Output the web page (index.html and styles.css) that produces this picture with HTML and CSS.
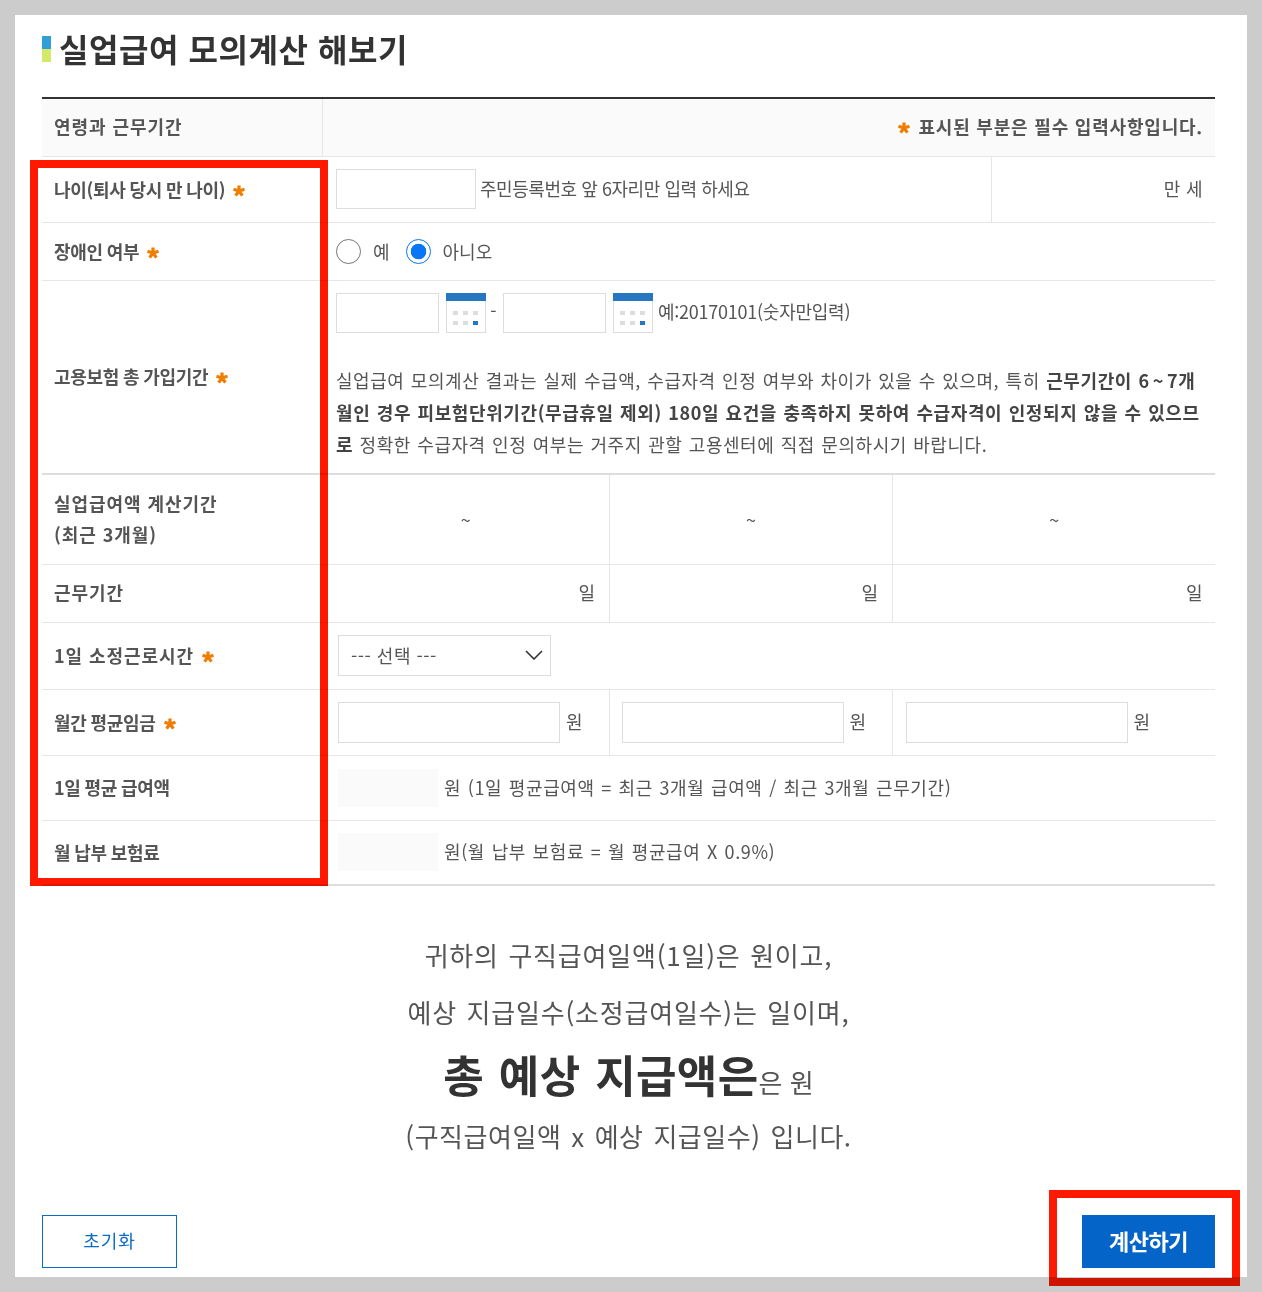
FILE: index.html
```html
<!DOCTYPE html>
<html lang="ko">
<head>
<meta charset="utf-8">
<title>실업급여 모의계산 해보기</title>
<link rel="stylesheet" href="styles.css">
</head>
<body>
<main class="panel">
  <h1 class="title"><span class="title-mark"></span>실업급여 모의계산 해보기</h1>
  <table class="calc">
    <colgroup><col class="c0"><col class="c1"><col class="c2"><col class="c3"><col class="c4"></colgroup>
    <tr class="r-head">
      <th>연령과 근무기간</th>
      <td colspan="4" class="req-note"><svg class="star star-note" width="12" height="12" viewBox="0 0 12 12"><path d="M6 6V.5M6 6l5.5-1.8M6 6l3.4 4.6M6 6l-3.4 4.6M6 6L.5 4.2" fill="none" stroke="#f07c00" stroke-width="3.2"/></svg>표시된 부분은 필수 입력사항입니다.</td>
    </tr>
    <tr class="r-age">
      <th class="tight">나이(퇴사 당시 만 나이)<svg class="star" width="12" height="12" viewBox="0 0 12 12"><path d="M6 6V.5M6 6l5.5-1.8M6 6l3.4 4.6M6 6l-3.4 4.6M6 6L.5 4.2" fill="none" stroke="#f07c00" stroke-width="3.2"/></svg></th>
      <td colspan="3"><div class="inline"><span class="field f-age"></span><span class="hint">주민등록번호 앞 6자리만 입력 하세요</span></div></td>
      <td class="unit-right sep">만 세</td>
    </tr>
    <tr class="r-dis">
      <th class="tight">장애인 여부<svg class="star" width="12" height="12" viewBox="0 0 12 12"><path d="M6 6V.5M6 6l5.5-1.8M6 6l3.4 4.6M6 6l-3.4 4.6M6 6L.5 4.2" fill="none" stroke="#f07c00" stroke-width="3.2"/></svg></th>
      <td colspan="4"><div class="inline radios"><span class="radio"></span><span class="opt">예</span><span class="radio on"></span><span class="opt">아니오</span></div></td>
    </tr>
    <tr class="r-ins">
      <th class="tight">고용보험 총 가입기간<svg class="star" width="12" height="12" viewBox="0 0 12 12"><path d="M6 6V.5M6 6l5.5-1.8M6 6l3.4 4.6M6 6l-3.4 4.6M6 6L.5 4.2" fill="none" stroke="#f07c00" stroke-width="3.2"/></svg></th>
      <td colspan="4" class="top">
        <div class="inline dates">
          <span class="field f-date"></span>
          <svg class="cal" width="40" height="40" viewBox="0 0 40 40"><rect x=".5" y=".5" width="39" height="39" fill="#fff" stroke="#ddd"/><rect width="40" height="8" fill="#2577c2"/><g fill="#ddd"><rect x="7" y="18" width="5" height="4"/><rect x="17" y="18" width="5" height="4"/><rect x="27" y="18" width="5" height="4"/><rect x="7" y="28" width="5" height="4"/><rect x="17" y="28" width="5" height="4"/></g><rect x="27" y="28" width="5" height="4" fill="#2577c2"/></svg>
          <span class="dash">-</span>
          <span class="field f-date"></span>
          <svg class="cal" width="40" height="40" viewBox="0 0 40 40"><rect x=".5" y=".5" width="39" height="39" fill="#fff" stroke="#ddd"/><rect width="40" height="8" fill="#2577c2"/><g fill="#ddd"><rect x="7" y="18" width="5" height="4"/><rect x="17" y="18" width="5" height="4"/><rect x="27" y="18" width="5" height="4"/><rect x="7" y="28" width="5" height="4"/><rect x="17" y="28" width="5" height="4"/></g><rect x="27" y="28" width="5" height="4" fill="#2577c2"/></svg>
          <span class="hint-date">예:20170101(숫자만입력)</span>
        </div>
        <p class="notice">실업급여 모의계산 결과는 실제 수급액, 수급자격 인정 여부와 차이가 있을 수 있으며, 특히 <b>근무기간이 6<span class="tilde">~</span>7개월인 경우 피보험단위기간(무급휴일 제외) 180일 요건을 충족하지 못하여 수급자격이 인정되지 않을 수 있으므로</b> 정확한 수급자격 인정 여부는 거주지 관할 고용센터에 직접 문의하시기 바랍니다.</p>
      </td>
    </tr>
    <tr class="r-period">
      <th>실업급여액 계산기간<br>(최근 3개월)</th>
      <td class="center sep-r">~</td>
      <td class="center sep-r">~</td>
      <td colspan="2" class="center">~</td>
    </tr>
    <tr class="r-days">
      <th>근무기간</th>
      <td class="unit-right sep-r">일</td>
      <td class="unit-right sep-r">일</td>
      <td colspan="2" class="unit-right">일</td>
    </tr>
    <tr class="r-hours">
      <th>1일 소정근로시간<svg class="star" width="12" height="12" viewBox="0 0 12 12"><path d="M6 6V.5M6 6l5.5-1.8M6 6l3.4 4.6M6 6l-3.4 4.6M6 6L.5 4.2" fill="none" stroke="#f07c00" stroke-width="3.2"/></svg></th>
      <td colspan="4"><div class="select">--- 선택 ---<svg width="18" height="10" viewBox="0 0 18 10"><path d="M1 1l8 8 8-8" fill="none" stroke="#333" stroke-width="1.6"/></svg></div></td>
    </tr>
    <tr class="r-wage">
      <th class="tight">월간 평균임금<svg class="star" width="12" height="12" viewBox="0 0 12 12"><path d="M6 6V.5M6 6l5.5-1.8M6 6l3.4 4.6M6 6l-3.4 4.6M6 6L.5 4.2" fill="none" stroke="#f07c00" stroke-width="3.2"/></svg></th>
      <td class="sep-r w1"><div class="inline"><span class="field f-wage"></span><span class="won">원</span></div></td>
      <td class="sep-r w2"><div class="inline"><span class="field f-wage"></span><span class="won">원</span></div></td>
      <td colspan="2" class="w3"><div class="inline"><span class="field f-wage"></span><span class="won">원</span></div></td>
    </tr>
    <tr class="r-avg">
      <th class="tight">1일 평균 급여액</th>
      <td colspan="4"><div class="inline"><span class="readout"></span><span class="wide">원 (1일 평균급여액 = 최근 3개월 급여액 / 최근 3개월 근무기간)</span></div></td>
    </tr>
    <tr class="r-fee">
      <th class="tight">월 납부 보험료</th>
      <td colspan="4"><div class="inline"><span class="readout"></span><span class="wide">원(월 납부 보험료 = 월 평균급여 X 0.9%)</span></div></td>
    </tr>
  </table>
  <section class="result">
    <p>귀하의 구직급여일액(1일)은 원이고,</p>
    <p>예상 지급일수(소정급여일수)는 일이며,</p>
    <p class="total"><strong>총 예상 지급액은</strong>은 원</p>
    <p class="closing">(구직급여일액 x 예상 지급일수) 입니다.</p>
  </section>
  <div class="actions">
    <button class="btn reset" type="button">초기화</button>
    <button class="btn run" type="button">계산하기</button>
  </div>
</main>
<div class="mark mark-form"></div>
<div class="mark mark-btn"></div>
</body>
</html>
```

FILE: styles.css
```css
* { box-sizing: border-box; }
html, body { margin: 0; padding: 0; }
body {
  position: relative;
  width: 1262px;
  height: 1292px;
  padding: 15px;
  background: #ccc;
  font-family: "Noto Sans CJK KR", "Noto Sans", sans-serif;
  color: #555;
  font-size: 18px;
  overflow: hidden;
}
.panel {
  width: 1232px;
  height: 1262px;
  background: #fff;
  padding: 0 32px 0 27px;
}
.title {
  display: flex;
  align-items: center;
  height: 82px;
  margin: 0;
  padding-bottom: 17px;
  font-size: 32px;
  font-weight: 700;
  letter-spacing: .55px;
  color: #333;
}
.title-mark {
  width: 9px;
  height: 26px;
  margin: 2px 8px 0 0;
  background: linear-gradient(#2f9fd6 0 50%, #d4e86a 50% 100%);
}
.calc {
  width: 1173px;
  table-layout: fixed;
  border-collapse: collapse;
  border-top: 2px solid #333;
  border-bottom: 2px solid #ddd;
}
.c0 { width: 280px; }
.c1 { width: 287px; }
.c2 { width: 283px; }
.c3 { width: 99px; }
.c4 { width: 224px; }
.calc tr { border-bottom: 1px solid #e6e6e6; }
.calc th, .calc td { padding: 0 13px 0 14px; vertical-align: middle; font-weight: 400; }
.calc th {
  padding-left: 12px;
  text-align: left;
  font-weight: 700;
  font-size: 18px;
  line-height: 31px;
  color: #555;
  letter-spacing: .95px;
}
.calc th.tight { letter-spacing: -.3px; word-spacing: -.8px; }
.r-head th, .r-head td { background: #fafafa; padding-bottom: 2px; }
.r-head th { border-right: 1px solid #e6e6e6; }
.r-head { height: 58px; }
.calc .req-note { text-align: right; font-weight: 700; letter-spacing: .8px; padding-right: 12px; }
.star { display: inline-block; margin: 0 0 0 8px; vertical-align: baseline; }
.star-note { margin: 0 8px 0 0; }
.r-age { height: 66px; }
.r-dis { height: 58px; }
.calc .r-ins { height: 194px; border-bottom: 2px solid #ddd; }
.r-period { height: 90px; }
.r-days { height: 58px; }
.r-hours { height: 67px; }
.r-wage { height: 66px; }
.r-avg { height: 65px; }
.r-fee { height: 65px; }
.calc .top { vertical-align: top; padding-top: 12px; }
.sep { border-left: 1px solid #e6e6e6; }
.sep-r { border-right: 1px solid #e6e6e6; }
.calc .unit-right { text-align: right; padding-bottom: 2px; padding-right: 12px; letter-spacing: .4px; }
.calc .sep-r.unit-right { padding-right: 13px; }
.center { text-align: center; color: #555; }
.r-days th { padding-bottom: 2px; }
.inline { display: flex; align-items: center; }
.field { display: block; border: 1px solid #ddd; background: #fff; height: 40px; }
.f-age { width: 140px; margin-right: 4px; }
.hint { letter-spacing: -.45px; margin-top: -2px; }
.opt { margin-top: -1px; }
.radios .radio { margin-right: 12px; }
.radios .opt { margin-right: 16px; }
.radio {
  display: block;
  width: 25px;
  height: 25px;
  border: 1.5px solid #767676;
  border-radius: 50%;
  background: #fff;
}
.radio.on {
  border-color: #0a75f5;
  background: radial-gradient(circle, #0a75f5 0 7.5px, #fff 8.1px);
}
.f-date { width: 103px; }
.cal { display: block; margin-left: 7px; }
.dash { width: 17px; margin-top: -6px; padding-right: 2px; text-align: center; }
.hint-date { margin: -4px 0 0 5px; letter-spacing: -.25px; }
.notice {
  margin: 31px 0 0;
  line-height: 32px;
  letter-spacing: .55px;
  word-spacing: .8px;
  word-break: break-all;
  color: #555;
  font-size: 18px;
}
.notice b { font-weight: 700; color: #444; letter-spacing: .6px; }
.tilde { margin: 0 3px; }
.select {
  display: flex;
  align-items: center;
  justify-content: space-between;
  width: 213px;
  height: 41px;
  margin-left: 2px;
  padding: 0 7px 2px 12px;
  border: 1px solid #ddd;
  letter-spacing: .5px;
}
.calc .w1 { padding: 0 0 0 16px; }
.calc .w2 { padding: 0 0 0 12px; }
.calc .w3 { padding: 0 0 0 13px; }
.f-wage { width: 222px; height: 41px; margin-right: 6px; }
.won { margin-top: -2px; }
.readout { display: block; width: 100px; height: 38px; background: #fafafa; margin: 0 6px 0 2px; }
.wide { letter-spacing: .6px; word-spacing: 1px; margin-top: -2px; }
.result {
  height: 329px;
  padding-top: 49px;
  text-align: center;
  font-size: 26px;
  color: #555;
  letter-spacing: .8px;
  word-spacing: 1.5px;
}
.result p { margin: 0 0 18px; line-height: 39px; }
.result .total { line-height: 46px; margin-bottom: 11px; padding-top: 2px; letter-spacing: 0; word-spacing: 0; }
.result .closing { letter-spacing: .55px; word-spacing: 2px; }
.result strong { font-size: 44px; font-weight: 700; color: #333; letter-spacing: .35px; word-spacing: 2px; }
.actions { display: flex; justify-content: space-between; }
.btn {
  width: 135px;
  height: 53px;
  font-family: inherit;
  font-size: 18px;
  padding: 0 0 3px;
}
.reset { background: #fff; border: 1px solid #0a6cc4; color: #0a6cc4; letter-spacing: 1px; }
.run { width: 133px; background: #0564c8; border: 1px solid #0564c8; color: #fff; font-size: 22px; font-weight: 700; letter-spacing: -.5px; }
.mark { position: absolute; border: 8px solid #ff1900; mix-blend-mode: multiply; }
.mark-form { left: 30px; top: 160px; width: 298px; height: 726px; }
.mark-btn { left: 1049px; top: 1190px; width: 191px; height: 96px; }
```
